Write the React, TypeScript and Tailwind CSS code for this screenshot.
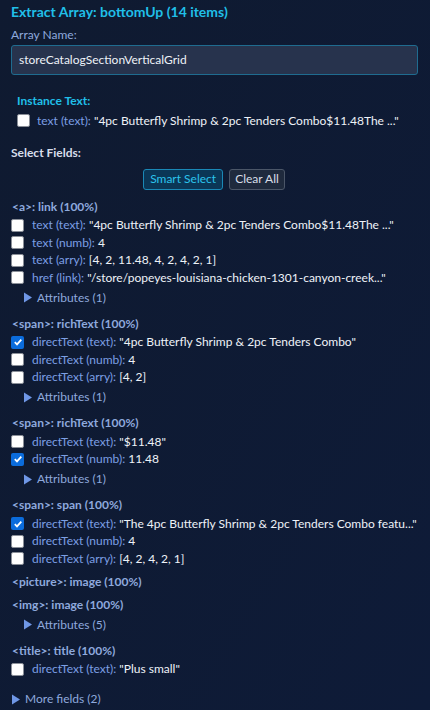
import React from "react";

type Field = { key: string; value: string; checked?: boolean };
type Group = { tag: string; fields: Field[]; attrs?: number };

const groups: Group[] = [
  {
    tag: "<a>: link (100%)",
    fields: [
      { key: "text (text):", value: '"4pc Butterfly Shrimp & 2pc Tenders Combo$11.48The ..."' },
      { key: "text (numb):", value: "4" },
      { key: "text (arry):", value: "[4, 2, 11.48, 4, 2, 4, 2, 1]" },
      { key: "href (link):", value: '"/store/popeyes-louisiana-chicken-1301-canyon-creek..."' },
    ],
    attrs: 1,
  },
  {
    tag: "<span>: richText (100%)",
    fields: [
      { key: "directText (text):", value: '"4pc Butterfly Shrimp & 2pc Tenders Combo"', checked: true },
      { key: "directText (numb):", value: "4" },
      { key: "directText (arry):", value: "[4, 2]" },
    ],
    attrs: 1,
  },
  {
    tag: "<span>: richText (100%)",
    fields: [
      { key: "directText (text):", value: '"$11.48"' },
      { key: "directText (numb):", value: "11.48", checked: true },
    ],
    attrs: 1,
  },
  {
    tag: "<span>: span (100%)",
    fields: [
      { key: "directText (text):", value: '"The 4pc Butterfly Shrimp & 2pc Tenders Combo featu..."', checked: true },
      { key: "directText (numb):", value: "4" },
      { key: "directText (arry):", value: "[4, 2, 4, 2, 1]" },
    ],
  },
  { tag: "<picture>: image (100%)", fields: [] },
  { tag: "<img>: image (100%)", fields: [], attrs: 5 },
  {
    tag: "<title>: title (100%)",
    fields: [{ key: "directText (text):", value: '"Plus small"' }],
  },
];

function Check({ checked }: { checked?: boolean }) {
  return checked ? (
    <span className="w-[13px] h-[13px] shrink-0 rounded-[2px] bg-[#0b6cdc] flex items-center justify-center">
      <svg width="10" height="10" viewBox="0 0 10 10">
        <path d="M1.8 5.2 L4 7.4 L8.3 2.6" fill="none" stroke="#fff" strokeWidth="1.8" />
      </svg>
    </span>
  ) : (
    <span className="w-[13px] h-[13px] shrink-0 rounded-[2px] bg-white border border-[#8a8f98]" />
  );
}

function Caret() {
  return (
    <svg width="10" height="11" viewBox="0 0 10 11" className="mr-[4px] shrink-0">
      <path d="M1 0.5 L9 5.5 L1 10.5 Z" fill="#6f97e6" />
    </svg>
  );
}

function Row({ field }: { field: Field }) {
  return (
    <div className="h-[17.5px] flex items-center gap-[8px] whitespace-nowrap">
      <Check checked={field.checked} />
      <span>
        <span className="text-[#7c9fe4]">{field.key} </span>
        <span className="text-[#eef2f8]">{field.value}</span>
      </span>
    </div>
  );
}

function Attributes({ n }: { n: number }) {
  return (
    <div className="h-[22px] flex items-center pl-[12px] text-[#8ea9dd]">
      <Caret />
      Attributes ({n})
    </div>
  );
}

export default function App() {
  return (
    <div
      className="w-[430px] h-[710px] overflow-hidden bg-gradient-to-br from-[#0f1a30] to-[#0e1b38] text-[12px] px-[11px]"
      style={{ fontFamily: 'Lato, "Noto Sans", sans-serif' }}
    >
      <div className="mt-[3px] leading-[18px] h-[18px] text-[14px] font-bold text-[#20bfe8]">
        Extract Array: bottomUp (14 items)
      </div>
      <div className="mt-[5px] h-[18px] leading-[18px] text-[#8ea9dd]">Array Name:</div>
      <div className="mt-[1px] h-[30px] w-[407px] flex items-center px-[7px] bg-[#27334d] border border-[#1f6c90] rounded-[3px] text-[#eef2f8]">
        storeCatalogSectionVerticalGrid
      </div>
      <div className="px-[6px]">
        <div className="mt-[17px] h-[18px] leading-[18px] font-bold text-[#20bfe8]">Instance Text:</div>
        <div className="mt-[2px] h-[17.5px] flex items-center gap-[7px] whitespace-nowrap">
          <Check />
          <span>
            <span className="text-[#7c9fe4]">text (text): </span>
            <span className="text-[#eef2f8]">"4pc Butterfly Shrimp &amp; 2pc Tenders Combo$11.48The ..."</span>
          </span>
        </div>
      </div>
      <div className="mt-[14px] h-[18px] leading-[18px] font-bold text-[#d7deea]">Select Fields:</div>
      <div className="mt-[7px] flex justify-center gap-[6px] pr-[2px]">
        <button className="h-[21px] px-[6px] rounded-[3px] bg-[#0b3656] border border-[#1a88b6] text-[#2bc3ec]">
          Smart Select
        </button>
        <button className="h-[21px] px-[5px] rounded-[3px] bg-[#1f2a3d] border border-[#4b5668] text-[#d8dee8]">
          Clear All
        </button>
      </div>
      <div className="mt-[8px] flex flex-col">
        {groups.map((g, i) => (
          <div key={i} className={g.attrs ? "mb-[6px]" : "mb-[5px]"}>
            <div className="h-[18px] leading-[18px] font-bold text-[#8ea9dd] pl-[1px]">{g.tag}</div>
            {g.fields.length > 0 && (
              <div className="pt-[1px]">
                {g.fields.map((f, j) => (
                  <Row key={j} field={f} />
                ))}
              </div>
            )}
            {g.attrs ? <Attributes n={g.attrs} /> : null}
          </div>
        ))}
      </div>
      <div className="mt-[7px] h-[18px] flex items-center text-[#8ea9dd]">
        <Caret />
        More fields (2)
      </div>
    </div>
  );
}
